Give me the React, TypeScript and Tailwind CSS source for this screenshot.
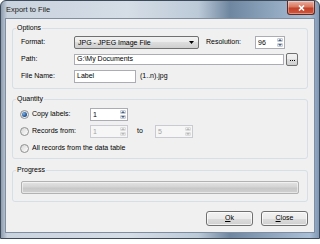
import React from "react";

function Radio({ checked }: { checked?: boolean }) {
  return (
    <div className="flex h-[9px] w-[9px] shrink-0 items-center justify-center rounded-full border border-[#8e8f8f] bg-[linear-gradient(135deg,#d6d6d6,#ffffff)]">
      {checked && (
        <div className="h-[5px] w-[5px] rounded-full bg-[radial-gradient(circle_at_35%_35%,#7fb2e6,#1d5294_65%,#133763)]" />
      )}
    </div>
  );
}

function SpinArrows({ disabled }: { disabled?: boolean }) {
  const fill = disabled ? "#b8b8b8" : "#4d6185";
  return (
    <div className="flex w-[8px] flex-col gap-[1px] p-[1px]">
      <div className={`flex flex-1 items-center justify-center rounded-[1px] border ${disabled ? "border-[#dcdcdc]" : "border-[#c4cbd4]"} bg-[linear-gradient(#f8f8f8,#e4e4e4)]`}>
        <svg width="4" height="2" viewBox="0 0 4 2">
          <path d="M0 2 L2 0 L4 2 Z" fill={fill} />
        </svg>
      </div>
      <div className={`flex flex-1 items-center justify-center rounded-[1px] border ${disabled ? "border-[#dcdcdc]" : "border-[#c4cbd4]"} bg-[linear-gradient(#f8f8f8,#e4e4e4)]`}>
        <svg width="4" height="2" viewBox="0 0 4 2">
          <path d="M0 0 L4 0 L2 2 Z" fill={fill} />
        </svg>
      </div>
    </div>
  );
}

function Spin({ value, w, disabled }: { value: string; w: string; disabled?: boolean }) {
  return (
    <div
      className={`flex h-[13px] shrink-0 ${w} border ${
        disabled ? "border-[#c9cbd0] bg-[#f6f6f6] text-[#a3a3a3]" : "border-[#abadb3] bg-white text-black"
      }`}
    >
      <div className="flex-1 pl-[2px] leading-[11px]">{value}</div>
      <SpinArrows disabled={disabled} />
    </div>
  );
}

function Button({ children }: { children: React.ReactNode }) {
  return (
    <div className="flex h-[15px] w-[47px] items-center justify-center rounded-[3px] border border-[#707070] bg-[linear-gradient(#f2f2f2_0%,#ebebeb_50%,#dddddd_50%,#cfcfcf_100%)] shadow-[inset_0_0_0_1px_rgba(255,255,255,0.7)]">
      {children}
    </div>
  );
}

export default function App() {
  return (
    <div className="h-[244px] w-[320px] bg-white font-['Liberation_Sans',Arial,sans-serif] text-[7px] text-black">
      <div className="flex h-[239px] w-[320px] flex-col rounded-t-[6px] border border-[#3c4a5a] bg-[linear-gradient(to_right,#8d9cae_0%,#c9d3de_2%,#d5dde6_40%,#bccad8_62%,#6e86a0_72%,#8aa1ba_83%,#a9bfd6_97%,#7f98b4_100%)]">
        {/* title bar */}
        <div className="flex h-[17px] items-start justify-between pl-[5px] pr-[4px]">
          <span className="mt-[4px] text-[7.5px] leading-[9px] text-[#1a1a1a]">Export to File</span>
          <div className="flex h-[14px] w-[28px] items-center justify-center rounded-b-[3px] border border-t-0 border-[#5e2a22] bg-[linear-gradient(#eab0a4_0%,#d9775f_45%,#c2412b_55%,#d0573b_100%)] shadow-[inset_0_0_0_1px_rgba(255,255,255,0.35)]">
            <svg width="7" height="6" viewBox="0 0 7 6">
              <path d="M1 0.5 L6 5.5 M6 0.5 L1 5.5" stroke="#ffffff" strokeWidth="1.6" />
            </svg>
          </div>
        </div>

        {/* client area */}
        <div className="mx-[4px] mb-[5px] flex flex-1 flex-col border border-[#7f8ea0] bg-[#f0f0f0] px-[6px] pt-[5px]">
          {/* Options */}
          <fieldset className="rounded-[3px] border border-[#d5dfe5] px-[8px] pb-[5px] pt-[4px]">
            <legend className="-ml-[5px] px-[1px] leading-[8px]">Options</legend>
            <div className="flex flex-col gap-[4px]">
              <div className="flex h-[13px] items-center">
                <span className="w-[53px] shrink-0">Format:</span>
                <div className="flex h-[13px] w-[125px] shrink-0 items-center justify-between rounded-[2px] border border-[#707070] bg-[linear-gradient(#f2f2f2_0%,#ebebeb_50%,#dddddd_50%,#cfcfcf_100%)] pl-[3px] pr-[4px]">
                  <span className="leading-[11px]">JPG - JPEG Image File</span>
                  <svg width="5" height="3" viewBox="0 0 5 3">
                    <path d="M0 0 L5 0 L2.5 3 Z" fill="#000000" />
                  </svg>
                </div>
                <span className="ml-[7px] w-[49px] shrink-0">Resolution:</span>
                <Spin value="96" w="w-[30px]" />
              </div>
              <div className="flex h-[13px] items-center">
                <span className="w-[53px] shrink-0">Path:</span>
                <div className="flex h-[11px] w-[210px] shrink-0 items-center border border-[#abadb3] bg-white pl-[2px]">
                  G:\My Documents
                </div>
                <div className="ml-[2px] flex h-[13px] w-[12px] items-center justify-center gap-[1px] rounded-[2px] border border-[#707070] bg-[linear-gradient(#f2f2f2_0%,#ebebeb_50%,#dddddd_50%,#cfcfcf_100%)] pt-[2px]">
                  <div className="h-[1px] w-[1px] bg-black" />
                  <div className="h-[1px] w-[1px] bg-black" />
                  <div className="h-[1px] w-[1px] bg-black" />
                </div>
              </div>
              <div className="flex h-[13px] items-center">
                <span className="w-[53px] shrink-0">File Name:</span>
                <div className="flex h-[13px] w-[62px] shrink-0 items-center border border-[#abadb3] bg-white pl-[2px]">
                  Label
                </div>
                <span className="ml-[4px]">(1..n).jpg</span>
              </div>
            </div>
          </fieldset>

          {/* Quantity */}
          <fieldset className="mt-[6px] rounded-[3px] border border-[#d5dfe5] pb-[3px] pl-[7px] pr-[8px] pt-[5px]">
            <legend className="-ml-[4px] px-[1px] leading-[8px]">Quantity</legend>
            <div className="flex flex-col gap-[4px]">
              <div className="flex h-[13px] items-center">
                <Radio checked />
                <span className="ml-[3px] w-[58px] shrink-0">Copy labels:</span>
                <Spin value="1" w="w-[38px]" />
              </div>
              <div className="flex h-[13px] items-center">
                <Radio />
                <span className="ml-[3px] w-[58px] shrink-0">Records from:</span>
                <Spin value="1" w="w-[38px]" disabled />
                <span className="ml-[9px] w-[18px] shrink-0">to</span>
                <Spin value="5" w="w-[38px]" disabled />
              </div>
              <div className="flex h-[13px] items-center">
                <Radio />
                <span className="ml-[3px]">All records from the data table</span>
              </div>
            </div>
          </fieldset>

          {/* Progress */}
          <fieldset className="mt-[7px] rounded-[3px] border border-[#d5dfe5] px-[8px] pb-[7px] pt-[7px]">
            <legend className="-ml-[5px] px-[1px] leading-[8px]">Progress</legend>
            <div className="h-[13px] rounded-[2px] border border-[#b2b2b2] bg-[linear-gradient(#e4e4e4_0%,#d4d4d4_45%,#c8c8c8_55%,#d0d0d0_100%)] shadow-[inset_0_0_0_1px_rgba(255,255,255,0.5)]" />
          </fieldset>

          {/* Buttons */}
          <div className="mt-[9px] flex justify-end gap-[8px]">
            <Button>
              <span>
                <span className="underline">O</span>k
              </span>
            </Button>
            <Button>
              <span>
                <span className="underline">C</span>lose
              </span>
            </Button>
          </div>
        </div>
      </div>
    </div>
  );
}
